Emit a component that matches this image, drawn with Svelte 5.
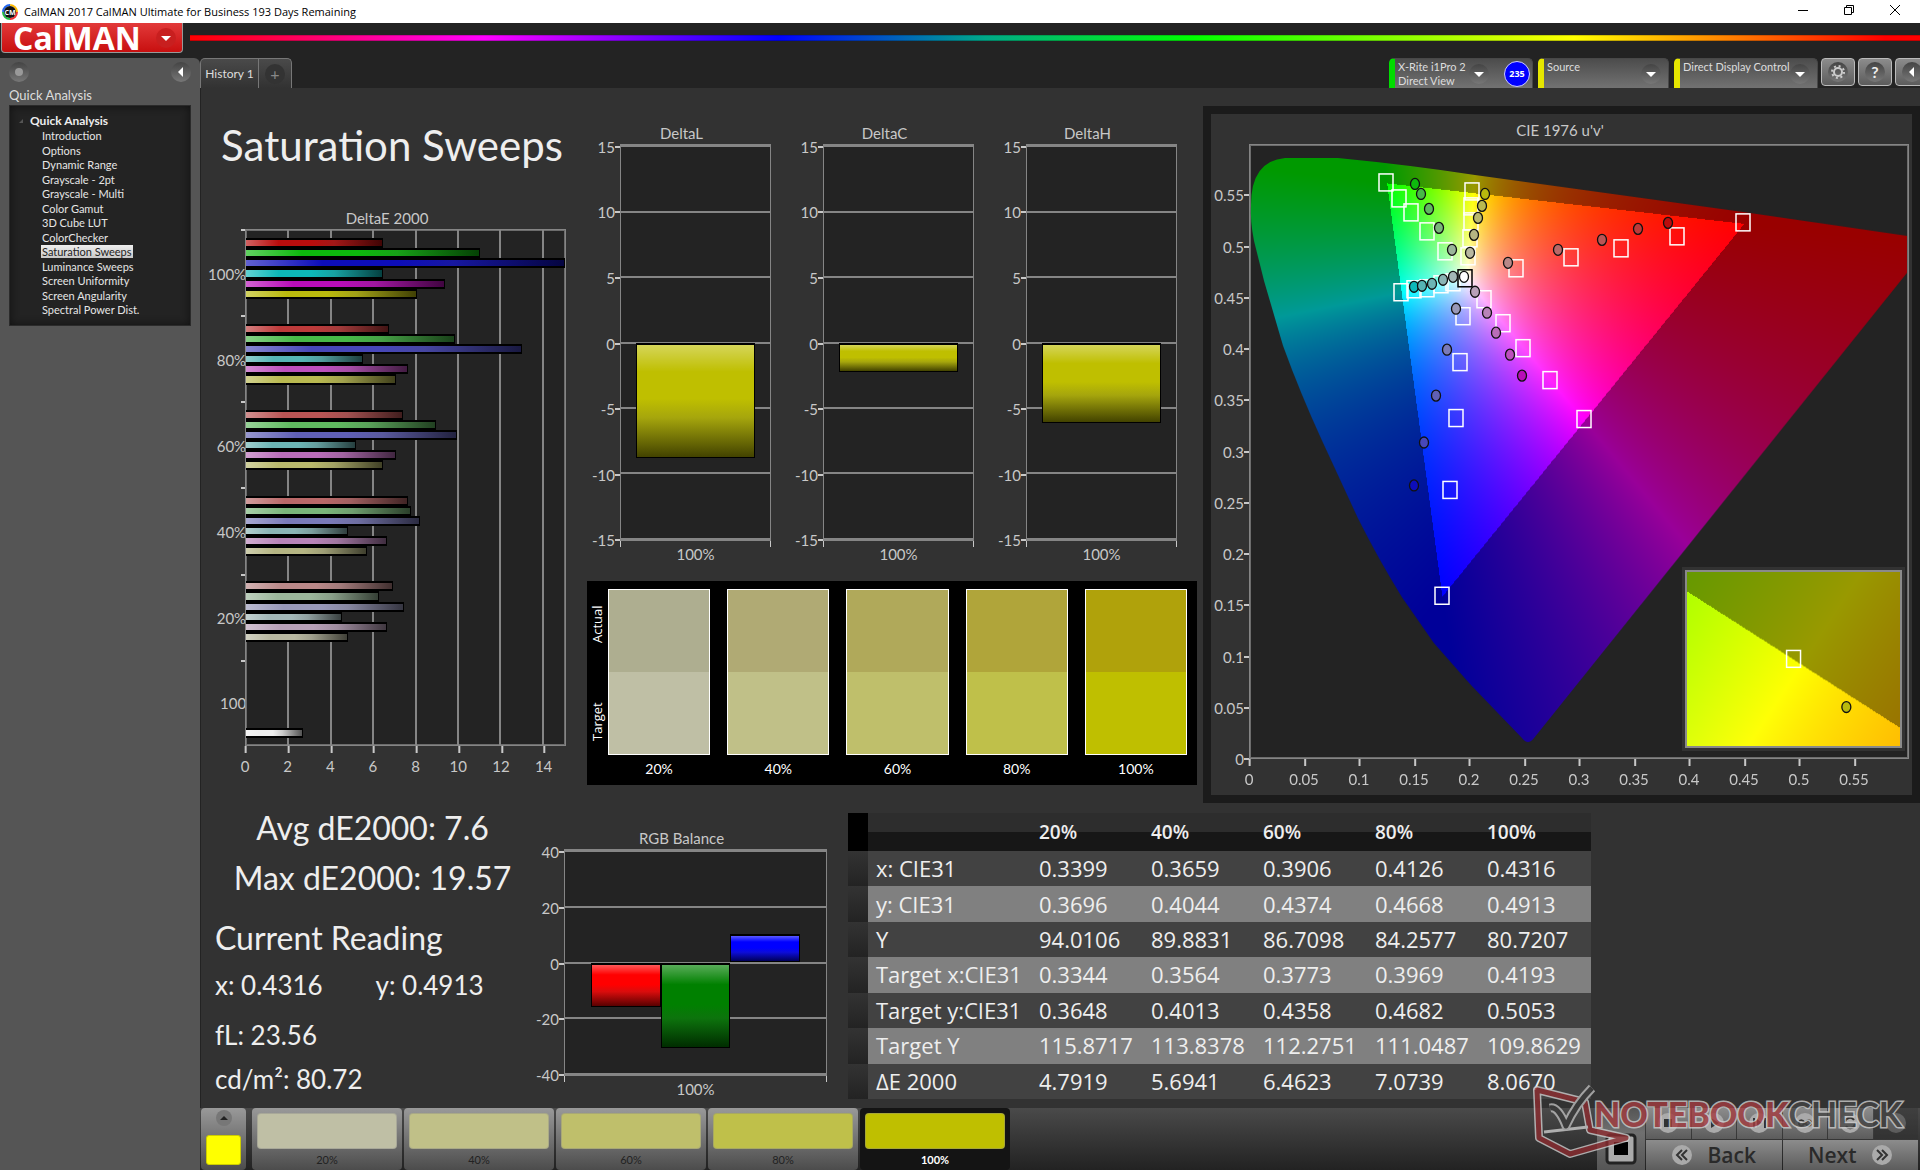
<script lang="ts">
	import { onMount } from 'svelte';

	type Bar = { value: number; color: string };
	type Point = [number, number];

	const pages = [
		'Introduction',
		'Options',
		'Dynamic Range',
		'Grayscale - 2pt',
		'Grayscale - Multi',
		'Color Gamut',
		'3D Cube LUT',
		'ColorChecker',
		'Saturation Sweeps',
		'Luminance Sweeps',
		'Screen Uniformity',
		'Screen Angularity',
		'Spectral Power Dist.'
	];
	let page = $state('Saturation Sweeps');

	// one row per saturation level: red, green, blue, cyan, magenta, yellow
	const sweeps = [
		{
			label: '100%',
			colors: ['#b90d0d', '#0db90d', '#0d0db9', '#0db9b9', '#b90db9', '#b9b90d'],
			values: [6.46, 11.06, 19.57, 6.46, 9.37, 8.07]
		},
		{
			label: '80%',
			colors: ['#bd3a3a', '#47b947', '#4747b9', '#55b5b5', '#bd4fbd', '#b9b950'],
			values: [6.74, 9.86, 13.03, 5.52, 7.64, 7.07]
		},
		{
			label: '60%',
			colors: ['#b95555', '#60b960', '#6060b5', '#6db5b5', '#b96db9', '#b9b96d'],
			values: [7.4, 8.95, 9.94, 5.2, 7.06, 6.46]
		},
		{
			label: '40%',
			colors: ['#b96868', '#7ab67a', '#7a7ab9', '#8bb5b5', '#b883b8', '#b5b583'],
			values: [7.64, 7.78, 8.2, 4.82, 6.65, 5.69]
		},
		{
			label: '20%',
			colors: ['#b98888', '#9ab69a', '#9898b9', '#a3b8b8', '#b8a0b8', '#b8b8a0'],
			values: [6.93, 6.28, 7.45, 4.54, 6.65, 4.79]
		}
	];
	const deMax = 15.05;

	const deltas = [
		{ title: 'DeltaL', value: -8.9 },
		{ title: 'DeltaC', value: -2.3 },
		{ title: 'DeltaH', value: -6.2 }
	];

	const levels = ['20%', '40%', '60%', '80%', '100%'];
	const actual = ['#aeae90', '#b0aa74', '#b0a95a', '#b0a53a', '#b0a20b'];
	const target = ['#bfbfa5', '#c0c088', '#bfbf6b', '#bfc04a', '#bfbf00'];

	const rows: [string, string[]][] = [
		['x: CIE31', ['0.3399', '0.3659', '0.3906', '0.4126', '0.4316']],
		['y: CIE31', ['0.3696', '0.4044', '0.4374', '0.4668', '0.4913']],
		['Y', ['94.0106', '89.8831', '86.7098', '84.2577', '80.7207']],
		['Target x:CIE31', ['0.3344', '0.3564', '0.3773', '0.3969', '0.4193']],
		['Target y:CIE31', ['0.3648', '0.4013', '0.4358', '0.4682', '0.5053']],
		['Target Y', ['115.8717', '113.8378', '112.2751', '111.0487', '109.8629']],
		['ΔE 2000', ['4.7919', '5.6941', '6.4623', '7.0739', '8.0670']]
	];

	// chromaticity plot, in units of its 658 x 614 view box, 100% first
	const plotW = 658;
	const plotH = 614;
	const targets: Point[][] = [
		[[493, 77], [427, 91], [371, 103], [321, 112], [266, 123]],
		[[136, 37], [149, 53], [161, 67], [177, 86], [195, 106]],
		[[192, 451], [200, 345], [206, 273], [210, 217], [213, 171]],
		[[151, 147], [164, 144], [177, 143], [191, 139], [203, 137]],
		[[334, 274], [300, 235], [273, 203], [253, 178], [234, 154]],
		[[222, 46], [221, 61], [221, 76], [220, 93], [218, 111]]
	];
	const readings: Point[][] = [
		[[418, 78], [388, 84], [352, 95], [308, 105], [258, 118]],
		[[165, 39], [171, 49], [179, 64], [189, 83], [202, 105]],
		[[164, 341], [174, 298], [186, 251], [197, 205], [206, 164]],
		[[164, 142], [172, 141], [182, 139], [193, 135], [203, 132]],
		[[272, 231], [260, 210], [246, 188], [237, 168], [225, 147]],
		[[235, 49], [232, 61], [228, 73], [224, 90], [220, 108]]
	];
	const locus =
		'M35 13H88Q160 20 225 30L493 67L657 91V128L284 594Q278 602 272 594L221 541L184 499L152 453Q128 414 108 374L72 296Q50 248 33 201L14 136L4 96Q0 76 1 60Q1 16 35 13Z';

	const uTicks = [0, 0.05, 0.1, 0.15, 0.2, 0.25, 0.3, 0.35, 0.4, 0.45, 0.5, 0.55];

	let diagram: HTMLCanvasElement;
	let inset: HTMLCanvasElement;

	function toRgb(u: number, v: number) {
		const d = 6 * u - 16 * v + 12;
		const x = (9 * u) / d;
		const y = (4 * v) / d;
		const z = 1 - x - y;
		return [
			3.2406 * x - 1.5372 * y - 0.4986 * z,
			-0.9689 * x + 1.8758 * y + 0.0415 * z,
			0.0557 * x - 0.204 * y + 1.057 * z
		];
	}

	// colours outside the gamut triangle are drawn darker
	function shade(u: number, v: number, hueU: number) {
		const inside = Math.min(...toRgb(u, v)) >= 0;
		const rgb = toRgb(hueU, v);
		const peak = Math.max(...rgb);
		return rgb.map((c) => (Math.max(c, 0) / peak) * (inside ? 255 : 153));
	}

	function paint(
		canvas: HTMLCanvasElement,
		[u0, u1, v0, v1]: number[],
		{ clip, skew = 0, spread = 1 }: { clip?: string; skew?: number; spread?: number }
	) {
		const { width, height } = canvas;
		const source = document.createElement('canvas');
		source.width = width;
		source.height = height;
		const sctx = source.getContext('2d')!;
		const image = sctx.createImageData(width, height);
		const mid = (u0 + u1) / 2;
		for (let j = 0; j < height; j++) {
			const v = v1 - ((v1 - v0) * (j + 0.5)) / height;
			const shift = skew * (v - (v0 + v1) / 2);
			for (let i = 0; i < width; i++) {
				const u = u0 + ((u1 - u0) * (i + 0.5)) / width;
				const [r, g, b] = shade(u, v, mid + (u - shift - mid) * spread);
				image.data.set([r, g, b, 255], (j * width + i) * 4);
			}
		}
		sctx.putImageData(image, 0, 0);
		const ctx = canvas.getContext('2d')!;
		if (clip) ctx.clip(new Path2D(clip));
		ctx.drawImage(source, 0, 0);
	}

	onMount(() => {
		paint(diagram, [0, 0.6, 0, 0.6], { clip: locus });
		paint(inset, [0.178, 0.227, 0.5493, 0.5569], { skew: 3.3, spread: 0.55 });
	});
</script>

{#snippet arrow(direction: string)}
	<svg class="round" viewBox="0 0 20 20" aria-hidden="true">
		<circle cx="10" cy="10" r="10" fill="url(#knob)" />
		{#if direction === 'down'}
			<path d="M5 8h10l-5 5z" fill="#fff" />
		{:else}
			<path d="M12 5v10L7 10z" fill="#fff" />
		{/if}
	</svg>
{/snippet}

{#snippet columnChart(title: string, min: number, max: number, step: number, bars: Bar[])}
	<figure class="chart">
		<figcaption>{title}</figcaption>
		<div class="body">
			<div class="axis-y inner">
				{#each { length: (max - min) / step + 1 } as _, i}
					<span style="top: {(i * step * 100) / (max - min)}%">{max - i * step}</span>
				{/each}
			</div>
			<div class="plot thick">
				{#each { length: (max - min) / step - 1 } as _, i}
					<i class="line-h" style="top: {((i + 1) * step * 100) / (max - min)}%"></i>
				{/each}
				<div class="columns">
					{#each bars as bar}
						<div class="slot">
							<b
								class="column"
								style="background-color: {bar.color}; top: {((max - Math.max(bar.value, 0)) * 100) / (max - min)}%; height: {(Math.abs(bar.value) * 100) / (max - min)}%"
							></b>
						</div>
					{/each}
				</div>
			</div>
		</div>
		<div class="axis-x ends"><span>100%</span></div>
	</figure>
{/snippet}

<svg class="defs" aria-hidden="true">
	<linearGradient id="knob" x2="0" y2="1">
		<stop offset="0" stop-color="#444" />
		<stop offset="1" stop-color="#777" />
	</linearGradient>
</svg>

<div class="app">
	<header class="titlebar">
		<svg viewBox="0 0 16 16" aria-hidden="true">
			<circle cx="8" cy="8" r="7" fill="none" stroke="#e33" stroke-width="2" stroke-dasharray="11 33" />
			<circle cx="8" cy="8" r="7" fill="none" stroke="#2b4" stroke-width="2" stroke-dasharray="11 33" stroke-dashoffset="-11" />
			<circle cx="8" cy="8" r="7" fill="none" stroke="#26e" stroke-width="2" stroke-dasharray="11 33" stroke-dashoffset="-22" />
			<circle cx="8" cy="8" r="7" fill="none" stroke="#fb0" stroke-width="2" stroke-dasharray="11 33" stroke-dashoffset="-33" />
			<circle cx="8" cy="8" r="6" fill="#111" />
			<text x="8" y="11" text-anchor="middle">CM</text>
		</svg>
		<span>CalMAN 2017 CalMAN Ultimate for Business 193 Days Remaining</span>
		<div class="window-buttons">
			<button aria-label="Minimize"><svg viewBox="0 0 12 12"><path d="M1 6.5h10" /></svg></button>
			<button aria-label="Restore">
				<svg viewBox="0 0 12 12"><path d="M1.5 3.5h7v7h-7zM3.5 3.5v-2h7v7h-2" /></svg>
			</button>
			<button aria-label="Close"><svg viewBox="0 0 12 12"><path d="M1 1l10 10M11 1L1 11" /></svg></button>
		</div>
	</header>

	<div class="brand">
		<button class="logo">
			CalMAN
			<svg viewBox="0 0 20 20" aria-hidden="true">
				<circle cx="10" cy="10" r="10" fill="#c81f1f" />
				<path d="M5 8h10l-5 5z" fill="#fff" />
			</svg>
		</button>
		<div class="rainbow"></div>
	</div>

	<div class="workspace">
		<aside>
			<div class="aside-top">
				<svg class="round" viewBox="0 0 20 20" aria-hidden="true">
					<circle cx="10" cy="10" r="10" fill="url(#knob)" />
					<circle cx="10" cy="10" r="4" fill="#999" />
				</svg>
				<button class="bare" aria-label="Collapse">{@render arrow('left')}</button>
			</div>
			<h2>Quick Analysis</h2>
			<nav>
				<strong>
					<svg viewBox="0 0 6 6" aria-hidden="true"><path d="M5 1v4H1z" fill="#555" /></svg>
					Quick Analysis
				</strong>
				<ul>
					{#each pages as name}
						<li><a href="#{name}" class:selected={name === page} onclick={() => (page = name)}>{name}</a></li>
					{/each}
				</ul>
			</nav>
		</aside>

		<main>
			<div class="toolbar">
				<button class="tab">History 1</button>
				<button class="tab add" aria-label="Add history"><span>+</span></button>
				<div class="devices">
					<div class="device meter">
						<button>X-Rite i1Pro 2<br />Direct View</button>
						{@render arrow('down')}
						<span class="count">235</span>
					</div>
					<div class="device source">
						<select aria-label="Source"><option>Source</option></select>
						{@render arrow('down')}
					</div>
					<div class="device display">
						<select aria-label="Display"><option>Direct Display Control</option></select>
						{@render arrow('down')}
					</div>
					<button class="tool" aria-label="Settings">
						<svg viewBox="0 0 20 20">
							<circle cx="10" cy="10" r="10" fill="url(#knob)" />
							<circle cx="10" cy="10" r="4" fill="none" stroke="#ccc" stroke-width="2" />
							<circle cx="10" cy="10" r="6" fill="none" stroke="#ccc" stroke-width="2" stroke-dasharray="2 2.7" />
						</svg>
					</button>
					<button class="tool" aria-label="Help">
						<svg viewBox="0 0 20 20">
							<circle cx="10" cy="10" r="10" fill="url(#knob)" />
							<text x="10" y="16" text-anchor="middle">?</text>
						</svg>
					</button>
					<button class="tool" aria-label="Hide panel">{@render arrow('left')}</button>
				</div>
			</div>

			<div class="report">
				<div class="top">
					<section class="sweeps">
						<h1>Saturation Sweeps</h1>
						<figure class="chart delta-e">
							<figcaption>DeltaE 2000</figcaption>
							<div class="body">
								<div class="axis-y categories">
									{#each [...sweeps.map((s) => s.label), '100'] as label}
										<span>{label}</span>
									{/each}
								</div>
								<div class="plot">
									{#each [2, 4, 6, 8, 10, 12, 14] as value}
										<i class="line-v" style="left: {(value * 100) / deMax}%"></i>
									{/each}
									<div class="groups">
										{#each sweeps as sweep}
											<div class="group">
												{#each sweep.values as value, i}
													<b style="background-color: {sweep.colors[i]}; width: {(Math.min(value, deMax) * 100) / deMax}%"></b>
												{/each}
												<span></span>
											</div>
										{/each}
										<div class="group">
											{#each { length: 6 } as _}<span></span>{/each}
											<b style="background-color: #eee; width: {270 / deMax}%"></b>
										</div>
									</div>
								</div>
							</div>
							<div class="axis-x scale">
								{#each [0, 2, 4, 6, 8, 10, 12, 14] as value}
									<span style="left: {(value * 100) / deMax}%">{value}</span>
								{/each}
							</div>
						</figure>
					</section>

					<section class="deltas">
						<div class="trio">
							{#each deltas as { title, value }}
								{@render columnChart(title, -15, 15, 5, [{ value, color: '#bfbf00' }])}
							{/each}
						</div>
						<div class="compare">
							<div class="sides"><span>Actual</span><span>Target</span></div>
							{#each levels as level, i}
								<div class="pair">
									<div class="chips">
										<i style="background: {actual[i]}"></i>
										<i style="background: {target[i]}"></i>
									</div>
									{level}
								</div>
							{/each}
						</div>
					</section>

					<section class="cie">
						<figure class="chart">
							<figcaption>CIE 1976 u'v'</figcaption>
							<div class="body">
								<div class="axis-y">
									{#each uTicks as value}
										<span style="top: {100 - value / 0.006}%">{value}</span>
									{/each}
								</div>
								<div class="plot">
									<canvas bind:this={diagram} width={plotW} height={plotH}></canvas>
									<svg class="marks" viewBox="0 0 {plotW} {plotH}" preserveAspectRatio="none" aria-hidden="true">
										{#each targets as series}
											{#each series as [x, y]}
												<rect x={x - 7} y={y - 8} width="14" height="17" />
											{/each}
										{/each}
										<rect class="white-point" x="208" y="125" width="14" height="17" />
										{#each readings as series, hue}
											{#each series as [x, y], i}
												<ellipse cx={x} cy={y} rx="4.5" ry="5.5" fill={sweeps[i].colors[hue]} />
											{/each}
										{/each}
										<ellipse cx="214" cy="132" rx="4.5" ry="5.5" fill="#fff" />
									</svg>
									<div class="inset">
										<canvas bind:this={inset} width="214" height="175"></canvas>
										<svg class="marks" viewBox="0 0 214 175" preserveAspectRatio="none" aria-hidden="true">
											<rect x="100" y="79" width="14" height="17" />
											<ellipse cx="160" cy="136" rx="4.5" ry="5.5" fill="#b9b90d" />
										</svg>
									</div>
								</div>
							</div>
							<div class="axis-x scale">
								{#each uTicks as value}
									<span style="left: {value / 0.006}%">{value}</span>
								{/each}
							</div>
						</figure>
					</section>
				</div>

				<div class="bottom">
					<section class="reading">
						<p class="big center">Avg dE2000: 7.6</p>
						<p class="big center">Max dE2000: 19.57</p>
						<p class="big current">Current Reading</p>
						<p class="xy"><span>x: 0.4316</span><span>y: 0.4913</span></p>
						<p class="luminance">fL: 23.56</p>
						<p>cd/m²: 80.72</p>
					</section>

					<section class="balance">
						{@render columnChart('RGB Balance', -40, 40, 20, [
							{ value: -16, color: '#f00' },
							{ value: -31, color: '#008000' },
							{ value: 10.4, color: '#00f' }
						])}
					</section>

					<table>
						<thead>
							<tr>
								<th class="stub"></th>
								<th class="name"></th>
								{#each levels as level}<th>{level}</th>{/each}
							</tr>
						</thead>
						<tbody>
							{#each rows as [name, values]}
								<tr>
									<td class="stub"></td>
									<th scope="row">{name}</th>
									{#each values as value}<td>{value}</td>{/each}
								</tr>
							{/each}
						</tbody>
					</table>
				</div>
			</div>

			<footer>
				<button class="patch" aria-label="Current pattern">
					<svg viewBox="0 0 16 16" aria-hidden="true">
						<circle cx="8" cy="8" r="8" fill="#777" />
						<path d="M4 10h8L8 6z" fill="#222" />
					</svg>
					<i></i>
				</button>
				{#each levels as level, i}
					<button class="step" class:active={i === 4}>
						<i style="background: {target[i]}"></i>
						{level}
					</button>
				{/each}
				<div class="controls">
					<button class="stop" aria-label="Stop">
						<svg viewBox="0 0 32 32">
							<rect x="2" y="2" width="28" height="28" rx="3" fill="#aaa" stroke="#222" stroke-width="3" />
							<path fill="#000" d="M9 9h14v13H9z" />
						</svg>
					</button>
					<div class="transport">
						<div class="icons">
							<button aria-label="Pause"><svg viewBox="0 0 20 20"><circle cx="10" cy="10" r="10" /><path d="M6 6h8v8H6z" /></svg></button>
							<button aria-label="Play"><svg viewBox="0 0 20 20"><circle cx="10" cy="10" r="10" /><path d="M7 5l8 5-8 5z" /></svg></button>
							<button aria-label="Play series"><svg viewBox="0 0 20 20"><circle cx="10" cy="10" r="10" /><path d="M4 5h2v10H4zM8 6l5 4-5 4zM15 5h2v10h-2z" /></svg></button>
							<button aria-label="Loop"><svg viewBox="0 0 20 20"><circle cx="10" cy="10" r="10" /><path class="stroke" d="M10 10c-3-4-6-3-6 0s3 4 6 0 6-3 6 0-3 4-6 0z" /></svg></button>
							<button aria-label="Refresh"><svg viewBox="0 0 20 20"><circle cx="10" cy="10" r="10" /><path class="stroke" d="M14 7a5 5 0 0 0-9 2M6 13a5 5 0 0 0 9-2" /></svg></button>
							<button class="off" aria-label="More"><svg viewBox="0 0 20 20"><circle cx="10" cy="10" r="10" /></svg></button>
						</div>
						<div class="pager">
							<button><svg viewBox="0 0 20 20"><circle cx="10" cy="10" r="10" /><path class="stroke" d="M10 5l-5 5 5 5M15 5l-5 5 5 5" /></svg> Back</button>
							<button>Next <svg viewBox="0 0 20 20"><circle cx="10" cy="10" r="10" /><path class="stroke" d="M5 5l5 5-5 5M10 5l5 5-5 5" /></svg></button>
						</div>
					</div>
				</div>
			</footer>
		</main>
	</div>

	<svg class="watermark" viewBox="0 0 384 80" aria-hidden="true">
		<g stroke-linejoin="round" fill="none">
			<path d="M7 6L55 18L60 46L96 54L40 70L9 54Z" stroke="#ccc" stroke-width="8" />
			<path d="M7 6L55 18L60 46L96 54L40 70L9 54Z" stroke="#8c2c30" stroke-width="5" />
			<path d="M14 48L58 43" stroke="#ccc" stroke-width="3" />
			<path d="M20 24Q28 22 36 42Q46 20 62 4" stroke="#bbb" stroke-width="9" />
			<path d="M20 24Q28 22 36 42Q46 20 62 4" stroke="#3a3a3a" stroke-width="5" />
		</g>
		<text x="64" y="43"><tspan class="note">NOTEBOOK</tspan><tspan class="check">CHECK</tspan></text>
	</svg>
</div>

<style>
	:global(body) {
		margin: 0;
		background: #232323;
	}

	.app {
		--label: #c8c8c8;
		--rule: #858585;
		position: relative;
		min-height: 100vh;
		display: flex;
		flex-direction: column;
		overflow: hidden;
		color: #eee;
		font-family: Lato, 'Open Sans', sans-serif;
	}

	.app :where(*) {
		box-sizing: border-box;
	}

	:where(h1, h2, p, ul, figure) {
		margin: 0;
		padding: 0;
		font-weight: 400;
	}

	:where(button, select) {
		margin: 0;
		padding: 0;
		border: 0;
		background: none;
		color: inherit;
		font: inherit;
		cursor: pointer;
	}

	:where(i, b, svg, canvas) {
		display: block;
	}

	.defs {
		position: absolute;
		width: 0;
		height: 0;
	}

	.round {
		width: 20px;
		height: 20px;
	}

	.titlebar {
		display: flex;
		align-items: center;
		gap: 6px;
		height: 23px;
		padding-left: 2px;
		background: #fff;
		color: #000;
		font: 11px/22px 'Open Sans', sans-serif;

		& > svg {
			width: 16px;
			height: 16px;
		}

		& text {
			fill: #fff;
			font-size: 7px;
			font-weight: 700;
		}
	}

	.window-buttons {
		display: flex;
		margin-left: auto;
		padding: 0 2px 3px 0;

		& button {
			width: 46px;
			display: grid;
			place-items: center;
		}

		& svg {
			width: 12px;
			height: 12px;
			fill: none;
			stroke: #000;
		}
	}

	.brand {
		display: flex;
		align-items: flex-start;
		height: 35px;
		padding-left: 1px;
		background: #232323;
	}

	.logo {
		display: flex;
		align-items: center;
		justify-content: space-between;
		width: 182px;
		height: 30px;
		padding: 0 6px 0 11px;
		border: solid #999;
		border-width: 0 1px 1px;
		border-radius: 0 0 4px 4px;
		background: linear-gradient(#e23a3a, #c80f0f);
		color: #fff;
		font: 700 32px/26px 'Open Sans', sans-serif;

		& svg {
			width: 20px;
			height: 20px;
		}
	}

	.rainbow {
		flex: 1;
		height: 6px;
		margin: 12px 0 0 7px;
		background: linear-gradient(rgb(0 0 0 / 0.3), transparent 20% 80%, rgb(0 0 0 / 0.4)),
			linear-gradient(to right, #f00, #f0f 17%, #00f 34%, #0a8 46%, #0f0 58%, #ff0 80%, #f00 98%);
	}

	.workspace {
		flex: 1;
		display: flex;
	}

	aside {
		flex: none;
		width: 200px;
		padding: 4px 9px;
		border-radius: 0 6px 0 0;
		background: #555;

		& h2 {
			padding-top: 4px;
			color: #ddd;
			font-size: 13px;
			line-height: 19px;
		}
	}

	.aside-top {
		display: flex;
		justify-content: space-between;
	}

	nav {
		padding: 7px 2px 7px 5px;
		border: 1px solid #2b2b2b;
		background: #232323;
		box-shadow: inset 0 0 8px #111;

		& strong {
			display: flex;
			align-items: center;
			gap: 6px;
			padding-left: 3px;
			font-size: 12px;
			line-height: 15px;
		}

		& svg {
			width: 6px;
			height: 6px;
		}

		& ul {
			display: grid;
			grid-auto-rows: 1fr;
			height: 190px;
			padding: 1px 0 0 26px;
			list-style: none;
			font-size: 11px;
			line-height: 14px;
		}

		& a {
			padding: 0 1px;
			color: #e6e6e6;
			text-decoration: none;
		}

		& .selected {
			background: linear-gradient(#eee, #c8c8c8);
			color: #222;
		}
	}

	main {
		flex: 1;
		min-width: 0;
		display: flex;
		flex-direction: column;
	}

	.toolbar {
		display: flex;
		height: 30px;
		color: #ddd;
		font-size: 12px;
	}

	.tab {
		width: 59px;
		border: 1px solid #777;
		border-bottom: 0;
		border-radius: 5px 0 0 0;
		background: linear-gradient(#4a4a4a, #323232);
	}

	.add {
		width: 34px;
		margin-left: -1px;
		border-radius: 0 5px 0 0;
		display: grid;
		place-items: center;

		& span {
			width: 20px;
			border-radius: 50%;
			background: #333;
			color: #888;
			font-size: 16px;
			line-height: 20px;
		}
	}

	.devices {
		display: flex;
		gap: 5px;
		margin-left: auto;
		margin-right: -9px;
	}

	.device {
		display: grid;
		grid-template-columns: 1fr 27px;
		align-items: center;
		border: 1px solid #484848;
		border-bottom: 0;
		border-left: 6px solid #e6e600;
		border-radius: 5px 5px 0 0;
		background: linear-gradient(#4c4c4c, #727272);

		& button,
		& select {
			grid-area: 1 / 1 / 2 / 3;
			height: 29px;
			padding: 0 0 0 3px;
			appearance: none;
			font-size: 11px;
			line-height: 14px;
			text-align: left;
		}

		& select {
			padding-bottom: 14px;
		}

		& .round {
			grid-area: 1 / 2;
			pointer-events: none;
		}
	}

	.meter {
		grid-template-columns: 1fr 27px 36px;
		width: 144px;
		border-left-color: #0d0;
	}

	.source {
		width: 131px;
	}

	.display {
		width: 144px;
	}

	.count {
		grid-area: 1 / 3;
		width: 26px;
		margin-left: 8px;
		border: 1px solid #ccf;
		border-radius: 50%;
		background: #00f;
		color: #fff;
		font: 700 9px/24px 'Open Sans', sans-serif;
		text-align: center;
	}

	.tool {
		display: grid;
		place-items: center;
		width: 34px;
		height: 28px;
		margin-left: -2px;
		border: 1px solid #bbb;
		border-radius: 4px;
		background: linear-gradient(#8c8c8c, #5c5c5c);

		& svg {
			width: 20px;
			height: 20px;
		}

		& text {
			fill: #eee;
			font-size: 16px;
			font-weight: 700;
		}
	}

	.report {
		flex: 1;
		display: grid;
		grid-template-rows: 715fr 305fr;
		background: #323232;
		box-shadow: inset 1px 0 #232323;
	}

	.top {
		display: grid;
		grid-template-columns: minmax(0, 387fr) minmax(0, 610fr) minmax(0, 723fr);
	}

	.chart {
		--axis: 28px;
		flex: 1;
		min-width: 0;
		display: flex;
		flex-direction: column;
		color: var(--label);
		font-size: 15px;

		& figcaption {
			line-height: 22px;
			text-align: center;
		}
	}

	.body {
		flex: 1;
		display: grid;
		grid-template-columns: var(--axis) 1fr;
	}

	.axis-y {
		position: relative;

		& span {
			position: absolute;
			right: 0;
			display: flex;
			align-items: center;
			line-height: 20px;
			white-space: nowrap;
			translate: 0 -50%;
		}

		& span::after {
			content: '';
			width: 5px;
			height: 2px;
			background: var(--label);
		}
	}

	.inner {
		margin-block: 3px 1px;
	}

	.categories {
		display: grid;
		grid-auto-rows: 1fr;

		& span {
			position: relative;
			justify-content: flex-end;
			padding-top: 3px;
			translate: none;
		}

		& span::after {
			position: absolute;
			right: 0;
			top: 0;
		}

		& span:last-child {
			border-bottom: 2px solid transparent;
		}
	}

	.plot {
		position: relative;
		border: 1px solid var(--rule);
		background: #232323;
		outline: 1px solid #6c6c6c;
		outline-offset: -2px;
	}

	.thick {
		border-block-width: 3px;
		outline: 0;
	}

	.line-h,
	.line-v {
		position: absolute;
		background: var(--rule);
	}

	.line-h {
		inset-inline: 0;
		height: 2px;
		margin-top: -1px;
	}

	.line-v {
		inset-block: 0;
		width: 2px;
		margin-left: -1px;
	}

	.columns {
		position: absolute;
		inset: 0 10%;
		display: flex;
	}

	.slot {
		flex: 1;
		position: relative;
	}

	.column {
		position: absolute;
		inset-inline: 0;
		border: 1px solid #000;
		border-top-width: 2px;
		background-image: linear-gradient(
			rgb(255 255 255 / 0.35),
			transparent 24% 48%,
			rgb(64 64 64 / 0.2) 65%,
			rgb(0 0 0 / 0.65)
		);
	}

	.groups {
		position: absolute;
		inset: 0;
		display: grid;
		grid-auto-rows: 1fr;
	}

	.group {
		display: flex;
		flex-direction: column;
		padding: 8px 0 7px;

		& b,
		& span {
			flex: 1;
			border: 1px solid #000;
			border-width: 2px 1px 2px 0;
			background-image: linear-gradient(
				to right,
				rgb(255 255 255 / 0.35),
				transparent 24% 48%,
				rgb(64 64 64 / 0.2) 65%,
				rgb(0 0 0 / 0.65)
			);
		}

		& span {
			visibility: hidden;
		}
	}

	.axis-x {
		position: relative;
		height: 40px;
		margin-left: var(--axis);
		text-align: center;
		line-height: 26px;
	}

	.ends::before {
		content: '';
		position: absolute;
		inset: 0 0 auto;
		height: 6px;
		border: solid var(--label);
		border-width: 0 1px;
	}

	.scale span {
		position: absolute;
		translate: -50% 0;
		padding-top: 7px;
	}

	.scale span::before {
		content: '';
		position: absolute;
		top: 0;
		left: 50%;
		width: 2px;
		height: 7px;
		background: var(--label);
	}

	.sweeps {
		display: flex;
		flex-direction: column;
		gap: 32px;
		padding: 27px 21px 0 8px;

		& h1 {
			padding-left: 10px;
			font-size: 42px;
			line-height: 60px;
			text-align: center;
			white-space: nowrap;
		}

		& .axis-x {
			height: 57px;
		}
	}

	.delta-e {
		--axis: 37px;
	}

	.deltas {
		display: flex;
		flex-direction: column;
		padding: 34px 0 18px;
	}

	.trio {
		flex: 1;
		display: flex;
		gap: 24px;
		padding: 0 20px 0 5px;
	}

	.compare {
		display: flex;
		gap: 17px;
		padding: 8px 10px 4px 0;
		background: #000;
		color: #fff;
		font-size: 14px;
		line-height: 24px;
	}

	.sides {
		display: flex;
		flex-direction: row-reverse;
		justify-content: space-between;
		width: 21px;
		margin: 0 -17px 24px 0;
		padding: 16px 0;
		writing-mode: vertical-rl;
		rotate: 180deg;
		font: 13px/20px 'Open Sans', sans-serif;
	}

	.pair {
		flex: 1;
		text-align: center;
	}

	.chips {
		height: 166px;
		border: 1px solid #fff;
		margin-bottom: 2px;

		& i {
			height: 50%;
		}
	}

	.cie {
		display: flex;
		margin: 18px 0 0 6px;
		padding: 5px 3px 0 0;
		border: 8px solid #1b1b1b;

		& .chart {
			--axis: 38px;
		}

		& figcaption {
			margin-bottom: 3px;
		}

		& .axis-x {
			height: 36px;
		}

		& canvas {
			width: 100%;
			height: 100%;
			position: absolute;
			inset: 0;
		}
	}

	.marks {
		position: absolute;
		inset: 0;
		width: 100%;
		height: 100%;

		& rect {
			fill: none;
			stroke: #fff;
			stroke-width: 1.5;
		}

		& .white-point {
			stroke: #000;
		}

		& ellipse {
			stroke: #111;
			stroke-width: 1.3;
		}
	}

	.inset {
		position: absolute;
		right: 6px;
		bottom: 10px;
		width: 33%;
		height: 29%;
		border: 2px solid #8a8a8a;
		outline: 3px solid #323232;
	}

	.bottom {
		display: grid;
		grid-template-columns: minmax(0, 336fr) minmax(0, 291fr) minmax(0, 764fr) minmax(0, 329fr);
	}

	.reading {
		padding-left: 15px;
		font-size: 26px;
		line-height: 44px;
		white-space: nowrap;

		& .big {
			font-size: 32px;
			line-height: 50px;
		}

		& .center {
			padding-right: 6px;
			text-align: center;
		}

		& .current {
			margin-top: 10px;
		}

		& .xy {
			display: flex;
		}

		& .xy span {
			flex: 1;
		}

		& .luminance {
			margin-top: 6px;
		}
	}

	.balance {
		display: flex;
		padding-top: 24px;

		& .axis-x {
			height: 32px;
		}
	}

	table {
		align-self: start;
		margin: 10px 0 0 21px;
		border-collapse: collapse;
		table-layout: fixed;
		width: calc(100% - 21px);
		height: 286px;
		font: 22px/35px 'Open Sans', sans-serif;
		white-space: nowrap;

		& th,
		& td {
			padding: 0 0 0 8px;
			font-weight: 400;
			text-align: left;
		}

		& thead th {
			height: 38px;
			background: linear-gradient(#2d2d2d 50%, #171717 50%);
			font-size: 19px;
			font-weight: 600;
		}

		& tbody tr {
			background: #424242;
		}

		& tbody tr:nth-child(even) {
			background: #808080;
		}

		& .stub {
			width: 20px;
			padding: 0;
			background: linear-gradient(#333, #232323);
		}

		& thead .stub {
			background: #000;
		}

		& .name {
			width: 163px;
		}
	}

	footer {
		display: flex;
		gap: 2px;
		height: 62px;
		padding-left: 1px;
		background: linear-gradient(#4a4a4a, #222);
	}

	.patch,
	.step {
		display: flex;
		flex-direction: column;
		border-radius: 4px;
		background: linear-gradient(#999, #4c4c4c);
	}

	.patch {
		align-items: center;
		gap: 9px;
		width: 45px;
		margin-right: 4px;
		padding-top: 2px;

		& svg {
			width: 16px;
			height: 16px;
		}

		& i {
			width: 35px;
			height: 30px;
			border: 1px solid #cc0;
			border-radius: 3px;
			background: #ff0;
		}
	}

	.step {
		width: 150px;
		padding: 5px 5px 0;
		color: #222;
		font-size: 11px;
		line-height: 20px;
		text-align: center;

		& i {
			height: 36px;
			border: 1px solid #8886;
			border-radius: 4px;
			margin-bottom: 1px;
		}
	}

	.active {
		background: #141414;
		color: #fff;
		font-weight: 700;
	}

	.controls {
		display: flex;
		gap: 1px;
		width: 323px;
		margin-left: auto;
		padding-right: 2px;

		& svg {
			width: 20px;
			height: 20px;
			fill: #333;
		}

		& circle {
			fill: #aaa;
		}

		& .stroke {
			fill: none;
			stroke: #333;
			stroke-width: 2;
		}
	}

	.stop {
		display: flex;
		align-items: flex-end;
		justify-content: center;
		width: 48px;
		padding-bottom: 5px;
		background: linear-gradient(#555, #707070 40%, #555);

		& svg {
			width: 32px;
			height: 32px;
		}
	}

	.transport {
		flex: 1;
		display: flex;
		flex-direction: column;
		gap: 1px;
	}

	.icons,
	.pager {
		flex: 1;
		display: flex;
		gap: 1px;

		& button {
			flex: 1;
			display: flex;
			align-items: center;
			justify-content: center;
			background: linear-gradient(#8c8c8c, #5c5c5c);
		}
	}

	.icons .off {
		background: #2a2a2a;
		opacity: 0.3;
	}

	.pager button {
		gap: 16px;
		color: #2a2a2a;
		font: 600 21px/28px 'Open Sans', sans-serif;
	}

	.watermark {
		position: absolute;
		right: 6px;
		bottom: 6px;
		width: 384px;
		height: 80px;
		opacity: 0.8;
		pointer-events: none;

		& text {
			font-size: 34px;
			stroke: #ccc;
			stroke-width: 3;
			paint-order: stroke;
		}

		& .note {
			fill: #a33c40;
			font-weight: 900;
		}

		& .check {
			fill: #444;
			font-weight: 700;
		}
	}
</style>
